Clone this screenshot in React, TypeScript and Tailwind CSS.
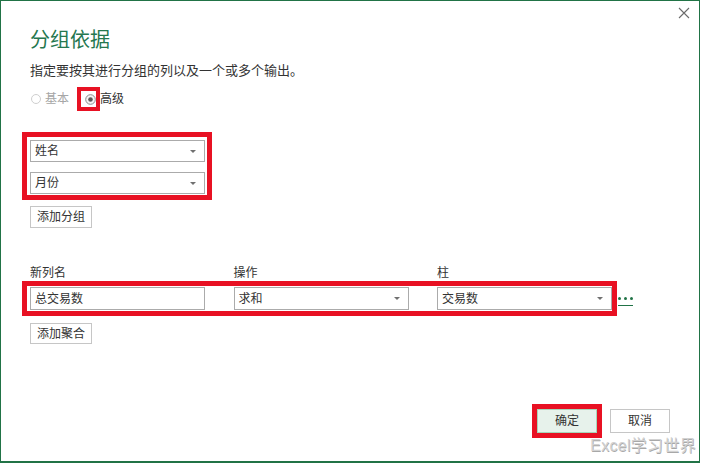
const FONT = "font-['Liberation_Sans','Noto_Sans_CJK_SC',sans-serif]";

function Caret() {
  return (
    <svg width="6" height="3" viewBox="0 0 6 3" aria-hidden="true">
      <path d="M0 0h6L3 3z" fill="#707070" />
    </svg>
  );
}

function Select({ value, className = "" }: { value: string; className?: string }) {
  return (
    <div
      className={`flex items-center justify-between border border-[#ababab] bg-white pl-[4px] pr-[8px] text-[12px] leading-none text-[#333] ${className}`}
    >
      <span>{value}</span>
      <Caret />
    </div>
  );
}

function Button({ label, className = "" }: { label: string; className?: string }) {
  return (
    <button
      className={`flex w-[62px] items-center justify-center border border-[#c6c6c6] bg-white text-[12px] leading-none text-[#333] ${className}`}
    >
      {label}
    </button>
  );
}

export default function App() {
  return (
    <div className={`h-[463px] w-[701px] bg-white ${FONT}`}>
      <div className="relative flex h-[463px] w-[700px] flex-col border border-b-2 border-[#217346] pl-[29px]">
        {/* header */}
        <div className="flex items-start justify-between">
          <h1 className="mt-[29px] text-[20px] leading-[20px] font-normal text-[#25774f]">分组依据</h1>
          <button aria-label="关闭" className="mt-[6px] mr-[9px] p-0">
            <svg width="12" height="12" viewBox="0 0 12 12" aria-hidden="true">
              <path d="M1 1l10 10M11 1L1 11" stroke="#6b6b6b" strokeWidth="1.1" />
            </svg>
          </button>
        </div>

        <p className="mt-[14px] text-[13px] leading-[13px] text-[#333]">
          指定要按其进行分组的列以及一个或多个输出。
        </p>

        {/* radio row */}
        <div className="mt-[10px] flex h-[24px] items-center text-[12px] leading-none">
          <span className="ml-[1px] h-[10px] w-[10px] rounded-full border border-[#cfcfcf] bg-white" />
          <span className="ml-[4px] text-[#a6a6a6]">基本</span>
          <div className="ml-[8px] flex h-[24px] w-[23px] items-center border-[4px] border-[#e81123] pl-[4px]">
            <svg width="11" height="11" viewBox="0 0 11 11" aria-hidden="true">
              <circle cx="5.5" cy="5.5" r="4.8" fill="#f4f4f4" stroke="#8c8c8c" strokeWidth="1" />
              <circle cx="5.5" cy="5.5" r="2.3" fill="#5a5a5a" />
            </svg>
          </div>
          <span className="text-[#333]">高级</span>
        </div>

        {/* group by */}
        <div className="mt-[21px] -ml-[8px] flex w-[190px] flex-col gap-[10px] border-[5px] border-[#e81123] pt-[3px] pr-[2px] pb-[1px] pl-[3px]">
          <Select value="姓名" className="h-[22px]" />
          <Select value="月份" className="h-[22px]" />
        </div>
        <Button label="添加分组" className="mt-[6px] h-[22px]" />

        {/* aggregation */}
        <div className="mt-[39px] grid grid-cols-[175px_175px_175px] gap-x-[28.5px] text-[12px] leading-[12px] text-[#333]">
          <span>新列名</span>
          <span>操作</span>
          <span>柱</span>
        </div>
        <div className="mt-[2px] flex items-start">
          <div className="-ml-[8px] grid grid-cols-[175px_175px_175px] gap-x-[28.5px] border-[5px] border-[#e81123] py-[1px] pl-[3px]">
            <div className="flex h-[23px] items-center border border-[#ababab] bg-white pl-[4px] text-[12px] leading-none text-[#333]">
              总交易数
            </div>
            <Select value="求和" className="h-[23px]" />
            <Select value="交易数" className="h-[23px]" />
          </div>
          <div className="mt-[16px] ml-[1px] flex w-[15px] flex-col">
            <div className="flex gap-[3px]">
              <span className="h-[3px] w-[3px] rounded-full bg-[#217346]" />
              <span className="h-[3px] w-[3px] rounded-full bg-[#217346]" />
              <span className="h-[3px] w-[3px] rounded-full bg-[#217346]" />
            </div>
            <div className="mt-[5px] h-[1px] w-[15px] bg-[#217346]" />
          </div>
        </div>
        <Button label="添加聚合" className="mt-[7px] h-[21px]" />

        {/* footer */}
        <div className="mt-[60px] flex items-center justify-end gap-[8px] pr-[29px]">
          <div className="border-[5px] border-[#e81123]">
            <button className="flex h-[24px] w-[60px] items-center justify-center border border-[#a6d6b9] bg-[#e7f2eb] text-[12px] leading-none text-[#333]">
              确定
            </button>
          </div>
          <button className="flex h-[24px] w-[60px] items-center justify-center border border-[#c6c6c6] bg-white text-[12px] leading-none text-[#333]">
            取消
          </button>
        </div>

        <span className="absolute right-[3px] bottom-[7px] text-[16px] leading-[16px] tracking-[0.3px] text-[#d2d2d2] [text-shadow:0.5px_0.5px_0_#a8a8a8]">
          Excel学习世界
        </span>
      </div>
    </div>
  );
}
